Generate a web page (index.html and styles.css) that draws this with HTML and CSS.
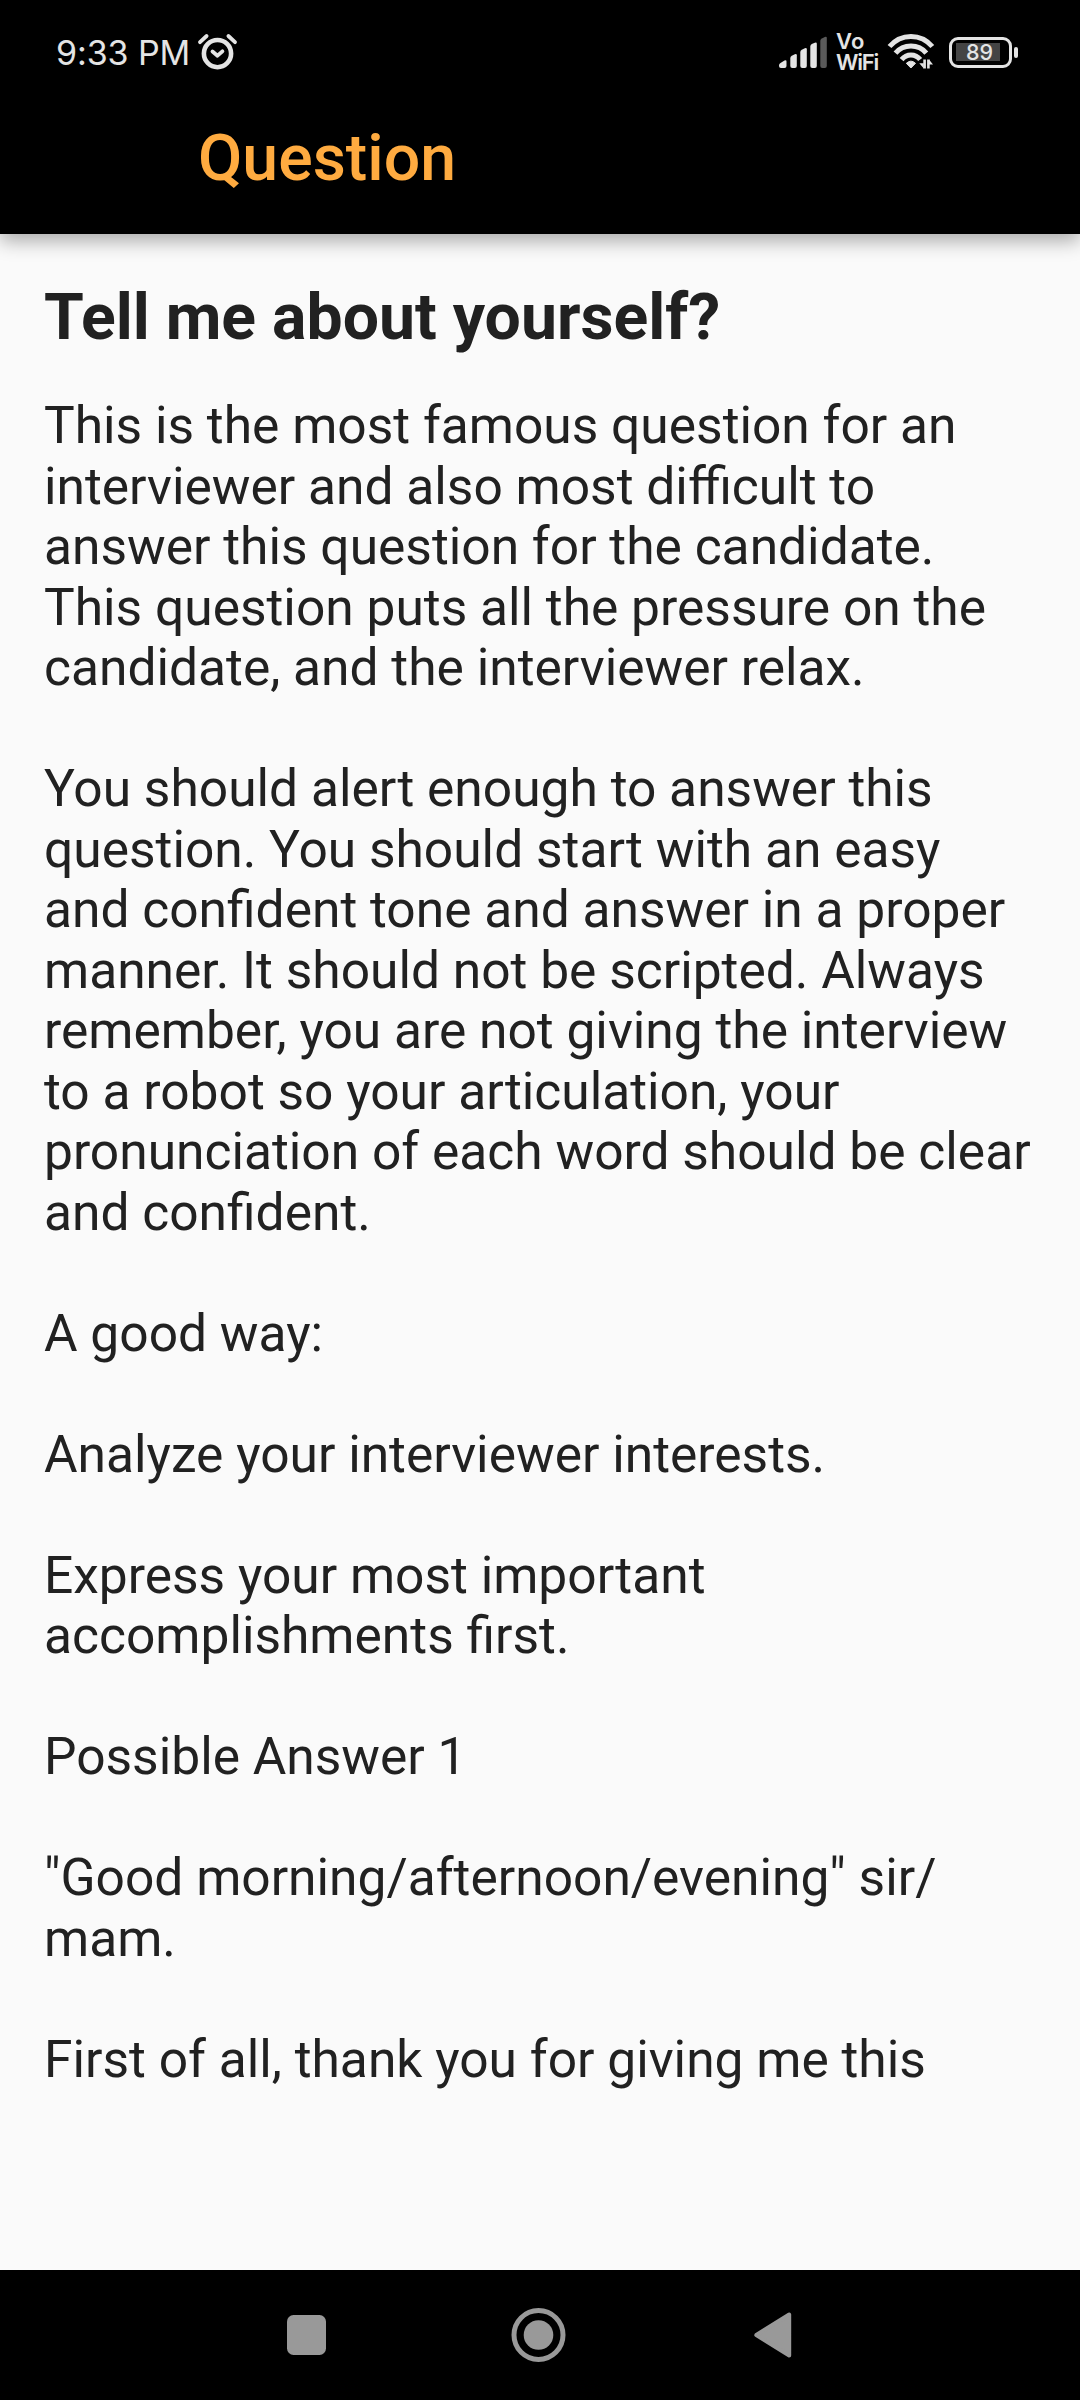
FILE: index.html
```html
<!DOCTYPE html>
<html lang="en">
<head>
<meta charset="utf-8">
<title>Question</title>
<link rel="stylesheet" href="styles.css">
</head>
<body>
<div class="screen">
  <header class="top">
    <div class="status">
      <span class="clock">9:33 PM</span>
      <svg class="alarm" width="42" height="40" viewBox="197 32 42 40" fill="none" stroke="#e4e4e4" stroke-linecap="round" stroke-linejoin="round">
        <circle cx="217.5" cy="53.6" r="13.6" stroke-width="4.6"/>
        <path d="M200 42.2l6.600-6.200M235 42.2l-6.600-6.200" stroke-width="3.8"/>
        <path d="M212.5 51.5l5 4.200 4.900-4.400" stroke-width="3.8"/>
      </svg>
      <svg class="signal" width="50" height="34" viewBox="778 36 50 34" fill="#e4e4e4">
        <path d="M779 65.5q0-1.6 1.5-2.4l4-2.5q2-1 2 1V66q0 2-2 2h-3.5q-2 0-2-2z"/>
        <path d="M790.300 58q0-1.600 1.500-2.300l3-1.400q2-.8 2 1V66q0 2-2 2h-2.500q-2 0-2-2z"/>
        <path d="M800.300 52q0-1.600 1.500-2.300l3-1.400q2-.8 2 1V66q0 2-2 2h-2.500q-2 0-2-2z"/>
        <path d="M810.300 46.400q0-1.600 1.500-2.300l3-1.400q2-.8 2 1V66q0 2-2 2h-2.500q-2 0-2-2z"/>
        <path d="M820.300 40.800q0-1.600 1.500-2.300l3-1.400q2-.8 2 1V66q0 2-2 2h-2.500q-2 0-2-2z" fill="#5a5a5a"/>
      </svg>
      <div class="vowifi"><span class="vo">Vo</span><span>WiFi</span></div>
      <svg class="wifi" width="48" height="38" viewBox="887 34 48 38" fill="none" stroke="#e4e4e4" stroke-width="5">
        <path d="M889.500 47.500C901 34 921 34 932.300 47.500"/>
        <path d="M895.500 54.200C903.500 44.700 918.500 44.700 926.300 54.200"/>
        <path d="M901.600 60.600C906.500 54.300 915.500 54.300 920.200 60.600"/>
        <path d="M906.300 64.300q4.600-4.300 9.200 0l-4.600 4.700z" fill="#e4e4e4" stroke-width="1" stroke-linejoin="round"/>
        <path d="M924.600 60.500v9M928.400 69.500v-9" stroke-width="2.600"/>
        <path d="M919.300 64.300h4.500v5.200zM933 65.500h-4v-5z" fill="#e4e4e4" stroke="none"/>
      </svg>
      <div class="battery"><div class="level">89</div></div>
      <i class="tip"></i>
    </div>
    <h1 class="title">Question</h1>
  </header>
  <main class="content">
    <h2 class="heading">Tell me about yourself?</h2>
    <p>This is the most famous question for an<br>interviewer and also most difficult to<br>answer this question for the candidate.<br>This question puts all the pressure on the<br>candidate, and the interviewer relax.</p>
    <p>You should alert enough to answer this<br>question. You should start with an easy<br>and confident tone and answer in a proper<br>manner. It should not be scripted. Always<br>remember, you are not giving the interview<br>to a robot so your articulation, your<br>pronunciation of each word should be clear<br>and confident.</p>
    <p>A good way:</p>
    <p>Analyze your interviewer interests.</p>
    <p>Express your most important<br>accomplishments first.</p>
    <p>Possible Answer 1</p>
    <p>"Good morning/afternoon/evening" sir/<br>mam.</p>
    <p>First of all, thank you for giving me this</p>
  </main>
  <nav class="nav">
    <svg width="40" height="56" viewBox="0 0 40 56" fill="#999"><rect x="0" y="8" width="39" height="40" rx="6.500"/></svg>
    <svg width="56" height="56" viewBox="0 0 56 56"><circle cx="27.500" cy="28" r="24.500" fill="none" stroke="#999" stroke-width="5"/><circle cx="27.500" cy="28" r="14.800" fill="#999"/></svg>
    <svg width="38" height="56" viewBox="0 0 38 56"><path d="M2.300 28L35.200 7.500V48.500z" fill="#999" stroke="#999" stroke-width="4" stroke-linejoin="round"/></svg>
  </nav>
</div>
</body>
</html>
```
FILE: styles.css
```css
* { box-sizing: border-box; margin: 0; }
body { font-family: Roboto, sans-serif; }
svg { display: block; flex: none; }
.screen { width: 1080px; height: 2400px; display: flex; flex-direction: column; background: #fafafa; overflow: hidden; }
.top { height: 234px; background: #000; box-shadow: 0 7px 18px rgba(0,0,0,.32); }
.status { height: 104px; padding: 0 62px 0 56px; display: flex; align-items: center; color: #e4e4e4; font-family: Inter, sans-serif; }
.clock { width: 141px; font-size: 34px; letter-spacing: -.1px; white-space: nowrap; }
.signal { margin: 2px 0 0 539px; }
.vowifi { width: 59px; padding-left: 8px; display: flex; flex-direction: column; font-size: 22px; line-height: 21.500px; font-weight: 600; letter-spacing: -1.200px; white-space: nowrap; }
.vo { letter-spacing: .3px; }
.battery { width: 63px; height: 31px; margin-left: 14px; padding: 3px 0 0 4px; border: 3px solid #e4e4e4; border-radius: 9px; }
.level { width: 44px; height: 18px; padding-left: 3px; background: #444; font-size: 21.500px; line-height: 18px; text-align: center; font-weight: 500; }
.tip { width: 4px; height: 11px; margin-left: 2px; background: #e4e4e4; border-radius: 2px; }
.title { padding-left: 198px; font-size: 64.400px; line-height: 108px; font-weight: 500; color: #ffab40; }
.content { flex: 1; padding: 45px 44px 0; color: #212121; font-size: 51.500px; line-height: 60.500px; }
.heading { font-size: 64.300px; line-height: 76px; margin-bottom: 41px; }
.content p { margin-bottom: 60.500px; white-space: nowrap; }
.nav { height: 130px; padding: 0 288px 0 287px; background: #000; display: flex; align-items: center; justify-content: space-between; }
.nav svg:nth-child(2) { margin-right: 3px; }
```
